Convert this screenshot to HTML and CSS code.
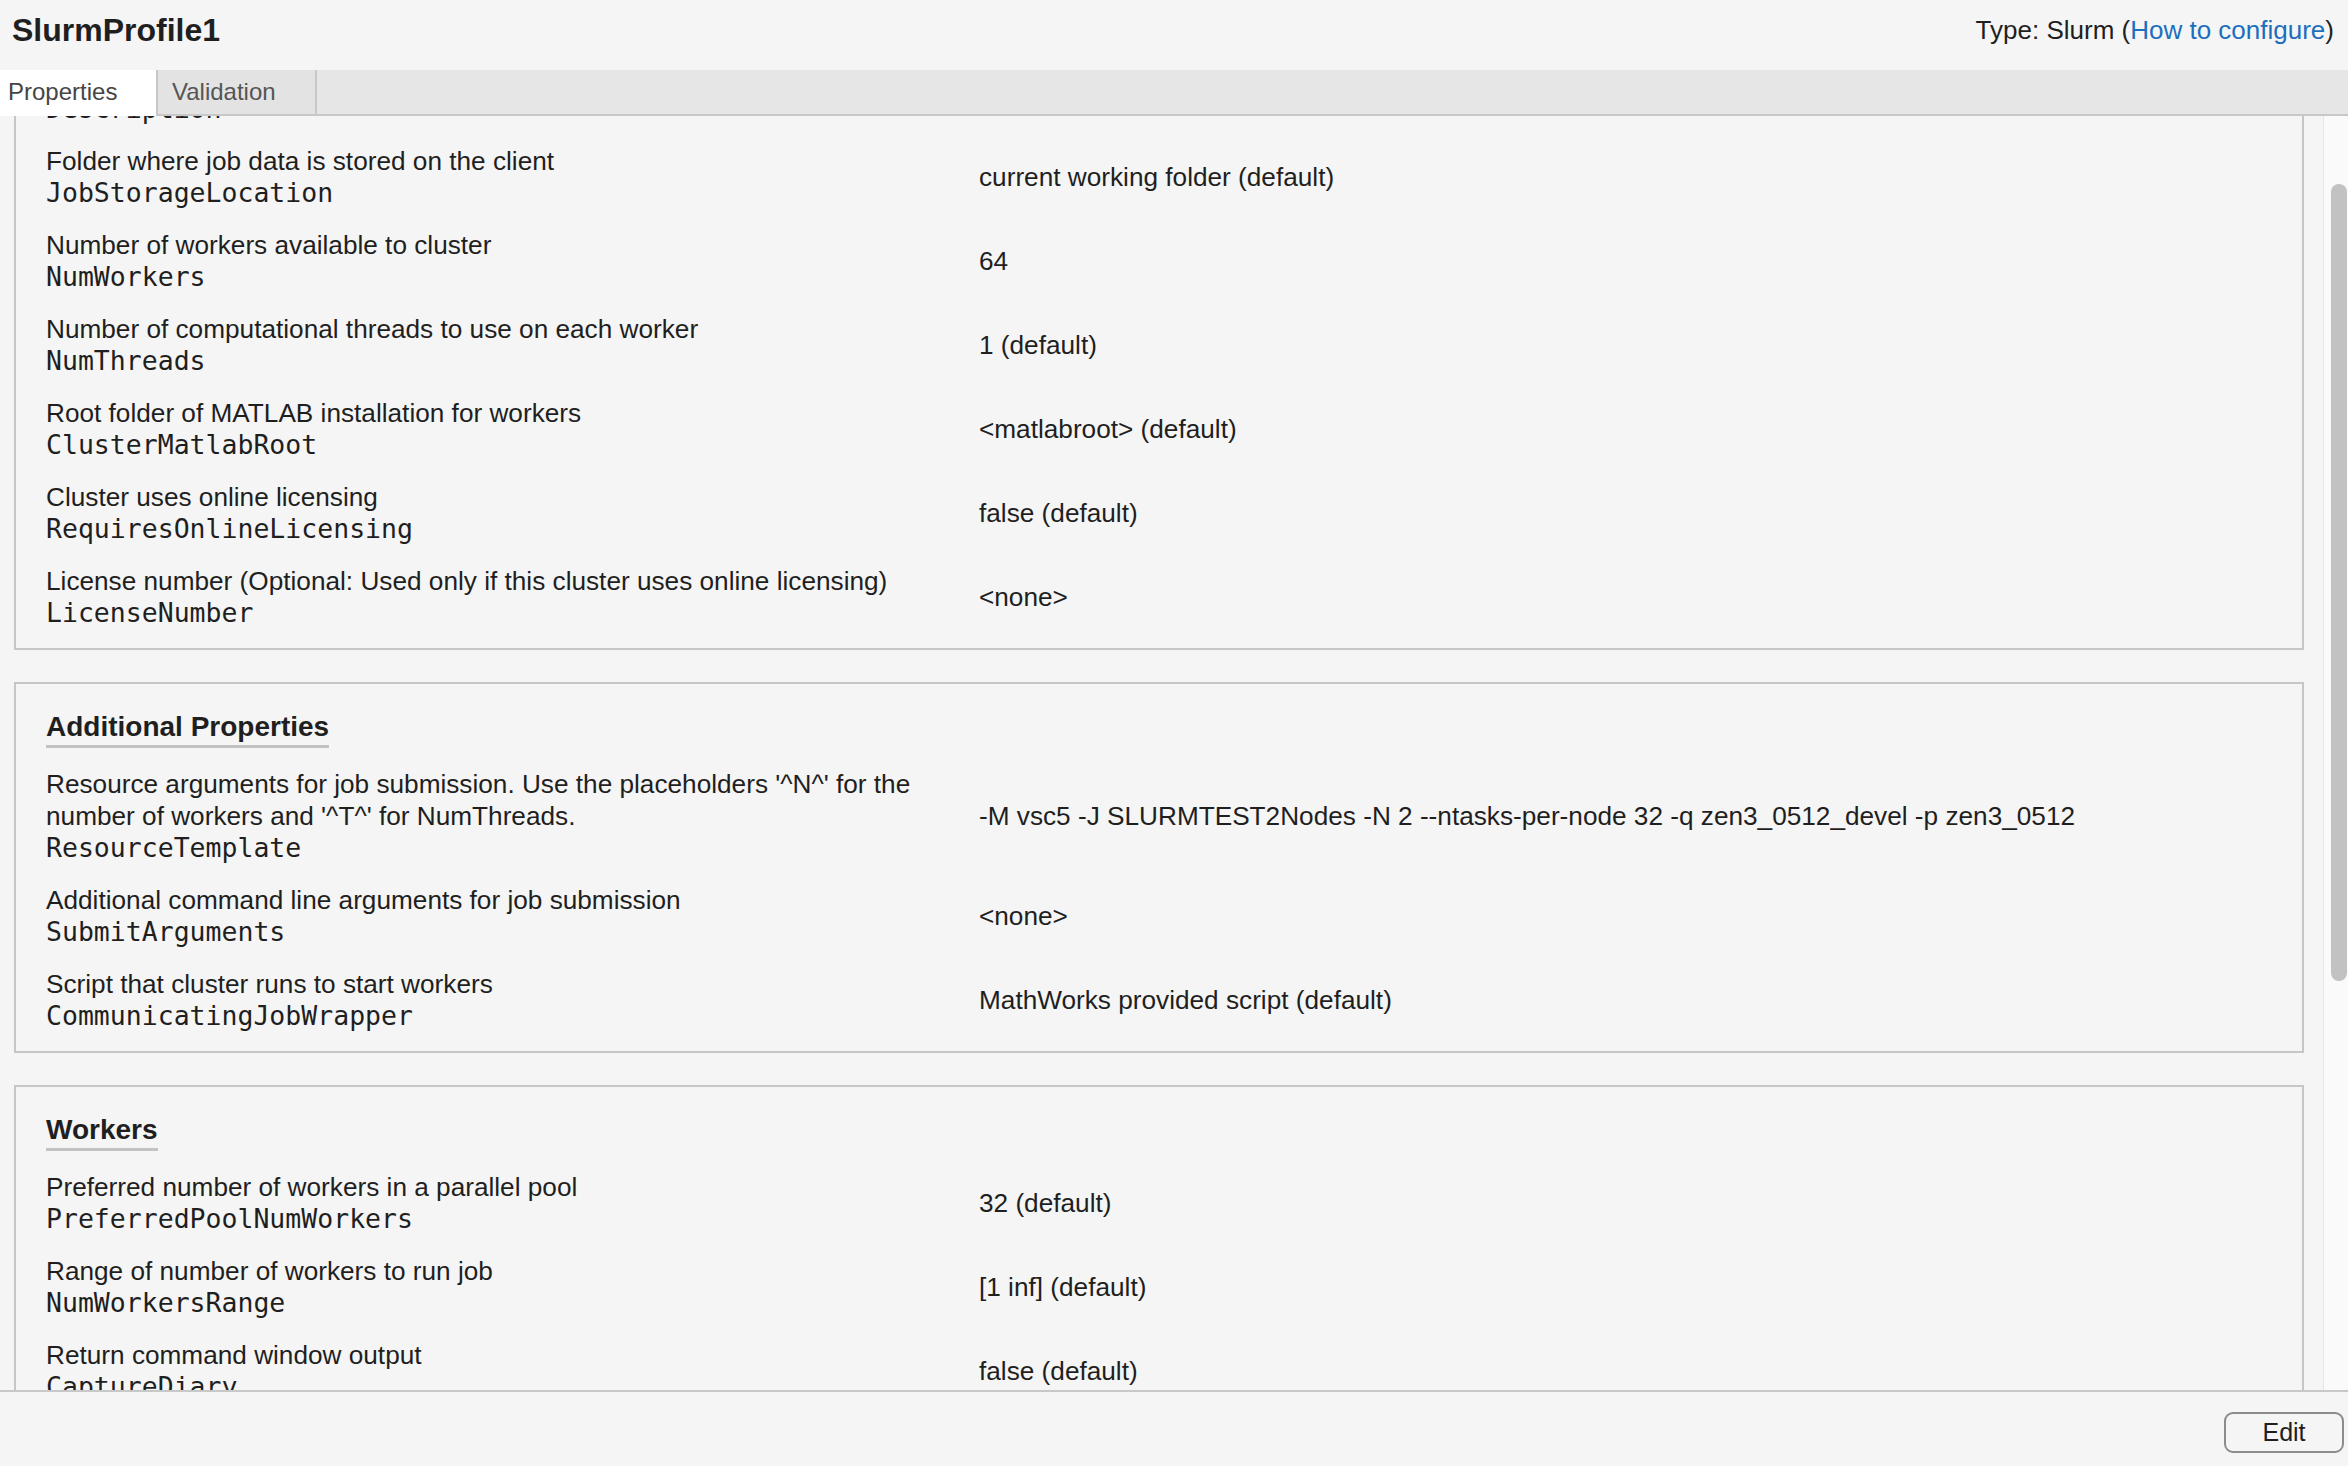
FILE: index.html
```html
<!DOCTYPE html>
<html lang="en">
<head>
<meta charset="utf-8">
<title>SlurmProfile1</title>
<link rel="stylesheet" href="styles.css">
</head>
<body>
<div class="app">
  <header class="titlebar">
    <h1 class="title">SlurmProfile1</h1>
    <div class="type">Type: Slurm <span class="paren">(<a class="link" href="#">How to configure</a>)</span></div>
  </header>
  <nav class="tabs">
    <div class="tab tab-active">Properties</div>
    <div class="tab tab-idle">Validation</div>
  </nav>
  <div class="body">
    <div class="viewport">
      <div class="scroll-content">
        <section class="panel panel-plain">
          <div class="row">
            <div class="label"><div class="desc">Description of this cluster</div><div class="prop">Description</div></div>
            <div class="val"></div>
          </div>
          <div class="row">
            <div class="label"><div class="desc">Folder where job data is stored on the client</div><div class="prop">JobStorageLocation</div></div>
            <div class="val">current working folder (default)</div>
          </div>
          <div class="row">
            <div class="label"><div class="desc">Number of workers available to cluster</div><div class="prop">NumWorkers</div></div>
            <div class="val">64</div>
          </div>
          <div class="row">
            <div class="label"><div class="desc">Number of computational threads to use on each worker</div><div class="prop">NumThreads</div></div>
            <div class="val">1 (default)</div>
          </div>
          <div class="row">
            <div class="label"><div class="desc">Root folder of MATLAB installation for workers</div><div class="prop">ClusterMatlabRoot</div></div>
            <div class="val">&lt;matlabroot&gt; (default)</div>
          </div>
          <div class="row">
            <div class="label"><div class="desc">Cluster uses online licensing</div><div class="prop">RequiresOnlineLicensing</div></div>
            <div class="val">false (default)</div>
          </div>
          <div class="row">
            <div class="label"><div class="desc">License number (Optional: Used only if this cluster uses online licensing)</div><div class="prop">LicenseNumber</div></div>
            <div class="val">&lt;none&gt;</div>
          </div>
        </section>

        <section class="panel">
          <h2 class="heading">Additional Properties</h2>
          <div class="row">
            <div class="label"><div class="desc">Resource arguments for job submission. Use the placeholders '^N^' for the<br>number of workers and '^T^' for NumThreads.</div><div class="prop">ResourceTemplate</div></div>
            <div class="val">-M vsc5 -J SLURMTEST2Nodes -N 2 --ntasks-per-node 32 -q zen3_0512_devel -p zen3_0512</div>
          </div>
          <div class="row">
            <div class="label"><div class="desc">Additional command line arguments for job submission</div><div class="prop">SubmitArguments</div></div>
            <div class="val">&lt;none&gt;</div>
          </div>
          <div class="row">
            <div class="label"><div class="desc">Script that cluster runs to start workers</div><div class="prop">CommunicatingJobWrapper</div></div>
            <div class="val">MathWorks provided script (default)</div>
          </div>
        </section>

        <section class="panel">
          <h2 class="heading">Workers</h2>
          <div class="row">
            <div class="label"><div class="desc">Preferred number of workers in a parallel pool</div><div class="prop">PreferredPoolNumWorkers</div></div>
            <div class="val">32 (default)</div>
          </div>
          <div class="row">
            <div class="label"><div class="desc">Range of number of workers to run job</div><div class="prop">NumWorkersRange</div></div>
            <div class="val">[1 inf] (default)</div>
          </div>
          <div class="row">
            <div class="label"><div class="desc">Return command window output</div><div class="prop">CaptureDiary</div></div>
            <div class="val">false (default)</div>
          </div>
          <div class="row">
            <div class="label"><div class="desc">Automatically attach files</div><div class="prop">AutoAttachFiles</div></div>
            <div class="val">true (default)</div>
          </div>
        </section>
      </div>
    </div>
    <div class="scrollbar"><div class="thumb"></div></div>
  </div>
  <footer class="footer">
    <button class="btn" type="button">Edit</button>
  </footer>
</div>
</body>
</html>
```

FILE: styles.css
```css
* {
  box-sizing: border-box;
}

html, body {
  margin: 0;
  padding: 0;
  background: #f5f5f5;
}

body {
  font-family: "Liberation Sans", Arial, sans-serif;
  color: #1f1f1f;
}

.app {
  display: flex;
  flex-direction: column;
  height: 1466px;
  overflow: hidden;
}

.titlebar {
  height: 70px;
  flex: none;
  display: flex;
  align-items: center;
  justify-content: space-between;
  padding: 0 14px 10px 12px;
  background: #f5f5f5;
}

.title {
  margin: 0;
  font-size: 32px;
  font-weight: bold;
  line-height: 40px;
  color: #1f1f1f;
}

.type {
  font-size: 26px;
  line-height: 40px;
  color: #1f1f1f;
}

.link {
  color: #1d6fbd;
  text-decoration: none;
}

.tabs {
  flex: none;
  height: 46px;
  display: flex;
  background: #e6e6e6;
  border-bottom: 2px solid #c8c8c8;
}

.tab {
  height: 44px;
  display: flex;
  align-items: center;
  font-size: 24px;
  color: #454545;
}

.tab-active {
  width: 156px;
  height: 46px;
  padding-left: 8px;
  background: #ffffff;
  margin-bottom: -2px;
  padding-bottom: 2px;
}

.tab-idle {
  width: 161px;
  padding-left: 14px;
  background: #e3e3e3;
  border-left: 2px solid #c8c8c8;
  border-right: 2px solid #c8c8c8;
  color: #555555;
}

.body {
  flex: 1;
  display: flex;
  min-height: 0;
}

.viewport {
  flex: 1;
  overflow: hidden;
  background: #f5f5f5;
}

.scroll-content {
  margin-top: -91px;
  padding-top: 14px;
}

.scrollbar {
  flex: none;
  width: 25px;
  background: #fafafa;
  border-left: 1px solid #e6e6e6;
  padding-left: 7px;
  padding-top: 68px;
}

.thumb {
  width: 16px;
  height: 797px;
  border-radius: 8px;
  background: #c2c2c2;
}

.panel {
  margin: 0 19px 32px 14px;
  border: 2px solid #c6c6c6;
  padding: 27px 0 9px 30px;
  background: #f5f5f5;
}

.panel-plain {
  padding-top: 10px;
}

.heading {
  margin: 0 0 10px 0;
  padding-bottom: 2px;
  width: fit-content;
  font-size: 28px;
  font-weight: bold;
  line-height: 32px;
  color: #1f1f1f;
  border-bottom: 3px solid #c2c2c2;
}

.row {
  display: grid;
  grid-template-columns: 933px 1fr;
  align-items: center;
  padding: 10px 0;
}

.desc {
  font-size: 26.2px;
  line-height: 32px;
}

.prop {
  font-family: "DejaVu Sans Mono", "Liberation Mono", monospace;
  font-size: 26.5px;
  line-height: 32px;
}

.val {
  font-size: 26.2px;
  line-height: 32px;
}

.footer {
  flex: none;
  height: 76px;
  border-top: 2px solid #c8c8c8;
  display: flex;
  justify-content: flex-end;
  align-items: flex-start;
  padding: 20px 4px 0 0;
  background: #f5f5f5;
}

.btn {
  width: 120px;
  height: 41px;
  border: 2px solid #8c8c8c;
  border-radius: 9px;
  background: #f5f5f5;
  font-family: "Liberation Sans", Arial, sans-serif;
  font-size: 25px;
  color: #1f1f1f;
  padding: 0;
}
```
